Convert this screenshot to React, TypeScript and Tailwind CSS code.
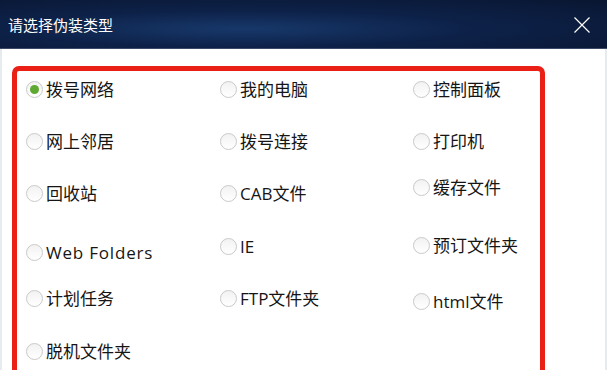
import React from "react";

type Item = { label: string; col: number; row: number; shift?: string; checked?: boolean; extra?: string };

const items: Item[] = [
  { label: "拨号网络", col: 1, row: 1, checked: true },
  { label: "我的电脑", col: 2, row: 1 },
  { label: "控制面板", col: 3, row: 1 },
  { label: "网上邻居", col: 1, row: 2 },
  { label: "拨号连接", col: 2, row: 2 },
  { label: "打印机", col: 3, row: 2 },
  { label: "回收站", col: 1, row: 3 },
  { label: "CAB文件", col: 2, row: 3 },
  { label: "缓存文件", col: 3, row: 3, shift: "-translate-y-[6px]" },
  { label: "Web Folders", col: 1, row: 4, shift: "translate-y-[7px]", extra: "tracking-[0.8px]" },
  { label: "IE", col: 2, row: 4, shift: "translate-y-[1px]" },
  { label: "预订文件夹", col: 3, row: 4 },
  { label: "计划任务", col: 1, row: 5, shift: "translate-y-[1px]" },
  { label: "FTP文件夹", col: 2, row: 5, shift: "translate-y-[1px]" },
  { label: "html文件", col: 3, row: 5, shift: "translate-y-[4px]" },
  { label: "脱机文件夹", col: 1, row: 6, shift: "translate-y-[2px]" },
];

const colClass: Record<number, string> = { 1: "col-start-1", 2: "col-start-2", 3: "col-start-3" };
const rowClass: Record<number, string> = {
  1: "row-start-1",
  2: "row-start-2",
  3: "row-start-3",
  4: "row-start-4",
  5: "row-start-5",
  6: "row-start-6",
};

function Radio({ checked }: { checked?: boolean }) {
  return (
    <span className="flex h-[17px] w-[17px] shrink-0 items-center justify-center rounded-full border border-[#c9c9c9] bg-gradient-to-b from-[#f2f2f2] to-white">
      {checked && <span className="h-[9px] w-[9px] rounded-full bg-[#5fa832]" />}
    </span>
  );
}

export default function App() {
  return (
    <div
      className="h-[370px] w-[607px] overflow-hidden bg-white"
      style={{ fontFamily: '"Open Sans", "Noto Sans CJK SC", sans-serif' }}
    >
      {/* title bar */}
      <div className="flex h-[48px] items-center justify-between bg-[radial-gradient(ellipse_at_40%_60%,#17386a_0%,#0d2148_45%,#091631_100%)] pt-[2px] pl-[8px] pr-[16px]">
        <span className="text-[15px] text-white">请选择伪装类型</span>
        <svg width="18" height="18" viewBox="0 0 18 18" className="text-white">
          <path d="M1.5 1.5L16.5 16.5M16.5 1.5L1.5 16.5" stroke="currentColor" strokeWidth="1.2" fill="none" />
        </svg>
      </div>
      <div className="h-px bg-[#3a4a66]" />

      {/* body */}
      <div className="border-x-2 border-[#e6ebee] pt-[17px] pl-[10px] pr-[60px]">
        <div className="h-[340px] rounded-[7px] border-[5px] border-[#ea1f16] pl-[9px]">
          <div className="grid grid-cols-[194px_193px_1fr] grid-rows-[repeat(6,36px)] gap-y-[16px] text-[17px] text-[#151515]">
            {items.map((it) => (
              <div
                key={it.label}
                className={`flex items-center gap-[3px] ${colClass[it.col]} ${rowClass[it.row]} ${it.shift ?? ""}`}
              >
                <Radio checked={it.checked} />
                <span className={`leading-none ${it.extra ?? ""}`}>{it.label}</span>
              </div>
            ))}
          </div>
        </div>
      </div>
    </div>
  );
}
